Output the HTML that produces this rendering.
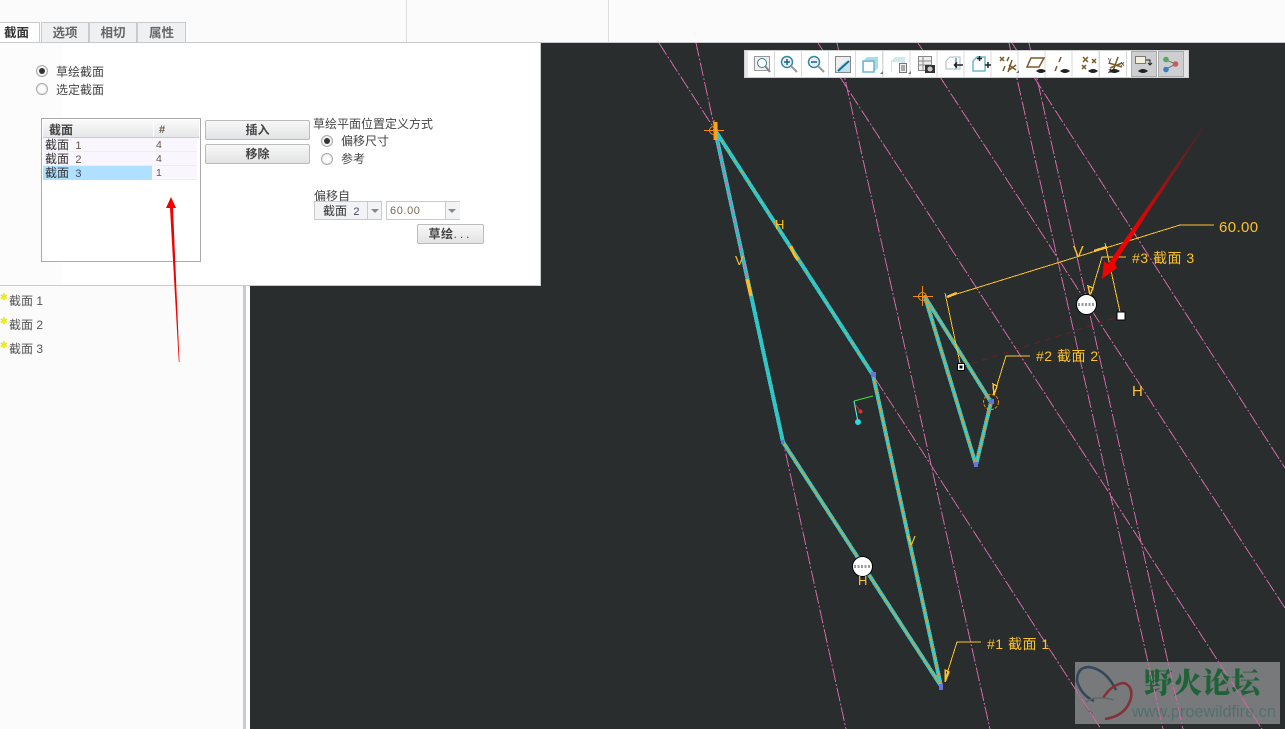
<!DOCTYPE html>
<html><head><meta charset="utf-8"><style>
html,body{margin:0;padding:0;width:1285px;height:729px;overflow:hidden;background:#fbfbfb}
body{position:relative;font-family:"Liberation Sans","Noto Sans CJK SC",sans-serif;font-size:12px;color:#444}
div,span{position:absolute;white-space:nowrap}
.t{line-height:14px}
.tab{top:22px;height:19px;background:#eef0f2;border:1px solid #c8cacc;border-bottom:0;font-weight:bold;color:#666;text-align:center;line-height:20px;font-size:12.5px}
.rb{width:10px;height:10px;border:1px solid #aaa;border-radius:50%;background:#fff;box-shadow:inset 0 0 2px #ccc}
.rb.on:after{content:"";position:absolute;left:2px;top:2px;width:6px;height:6px;border-radius:50%;background:#333}
.btn{background:linear-gradient(#f8f8f8,#e2e3e4);border:1px solid #bcbcbc;border-radius:2px;text-align:center;font-weight:bold;color:#444;line-height:18px}
.row{left:43px;width:154px;height:13px;background:#f9f6fd;border-bottom:1px solid #eee;line-height:14px;color:#333}
.row b{position:absolute;left:110px;width:1px;height:14px;background:#fff}
.row i{position:absolute;font-style:normal}
.row .n{font-size:10.5px;color:#654}
.tree{left:9px;color:#555;line-height:14px}
.star{left:0;color:#eeee00;font-size:9px;line-height:9px;font-weight:bold}
</style></head><body>
<div style="left:406px;top:0;width:1px;height:43px;background:#ddd"></div>
<div style="left:608px;top:0;width:1px;height:43px;background:#ddd"></div>
<div style="left:0;top:42px;width:1285px;height:1px;background:#c8cacc"></div>

<div style="left:250px;top:43px;width:1035px;height:686px;background:#2a2d2e"></div>
<div style="left:243px;top:286px;width:3px;height:443px;background:#c8cacc"></div>
<div style="left:246px;top:286px;width:4px;height:443px;background:#fff"></div>

<!-- watermark -->
<div style="left:1075px;top:662px;width:205px;height:62px;background:#77797a"></div>
<svg width="1285" height="729" style="position:absolute;left:0;top:0">
<g fill="none">
<path d="M1094 701Q1081 695 1077 681Q1077 667 1089 667Q1103 669 1112 683L1116 690" stroke="#33465a" stroke-width="2.500"/>
<path d="M1103 698Q1112 684 1124 683Q1133 686 1131 698Q1126 716 1105 719" stroke="#83303a" stroke-width="2.500"/>
<path d="M1086 702Q1094 695 1114 700M1085 704Q1087 712 1093 713" stroke="#5d686c" stroke-width="1.500"/>
</g>
</svg>
<div style="left:1144px;top:664px;font-family:'Noto Serif CJK SC',serif;font-weight:900;font-size:29px;line-height:36px;color:#1f6238">野火论坛</div>
<div style="left:1132px;top:703px;font-size:16.300px;line-height:19px;color:#52706e">www.proewildfire.cn</div>

<svg width="1285" height="729" style="position:absolute;left:0;top:0">
<defs><linearGradient id="ag" gradientUnits="userSpaceOnUse" x1="1202" y1="128" x2="1130" y2="235"><stop offset="0" stop-color="#f00000" stop-opacity=".1"/><stop offset="1" stop-color="#f00000"/></linearGradient></defs>
<g fill="none" stroke="#cf68a3" stroke-width="1" stroke-dasharray="14 2 2 2" shape-rendering="crispEdges">
<path d="M696 43L846 729M659 43L1101 729M818 43L1262 729M837 43L990 729M918 43L1285 608M1009 43L1163 729M1029 43L1183 729M1012 43L1285 468"/>
</g>
<g fill="none" stroke-linejoin="round" shape-rendering="crispEdges">
<path d="M715 130L783 442L941 686L873 375Z" stroke="#2fc6c8" stroke-width="4"/>
<path d="M925 297L976 465L991 402Z" stroke="#2fc6c8" stroke-width="4"/>
<path d="M783 442L941 686L873 375" stroke="#f0982a" stroke-width="1"/>
<path d="M715 130L873 375" stroke="#f0982a" stroke-width="1" stroke-dasharray="3 9"/>
<path d="M925 297L976 465L991 402Z" stroke="#f0982a" stroke-width="1"/>
<path d="M716 135L752 300" stroke="#cf68a3" stroke-width="1"/>
</g>
<g fill="#6a70e0"><rect x="871" y="372" width="5" height="5"/><rect x="939" y="684" width="4" height="6"/><rect x="974" y="462" width="4" height="5"/><rect x="989" y="399" width="5" height="5"/><rect x="781" y="440" width="3" height="4"/></g>
<path d="M747 279L751 296" stroke="#f9b92a" stroke-width="3.500"/>
<path d="M791 246Q793 254 798 260" stroke="#f9b92a" stroke-width="3" fill="none"/>
<g stroke="#f58a10" fill="none"><path d="M704 130.500H724M714 120V140"/><circle cx="713.500" cy="130.500" r="4"/><path d="M913 296.500H933M922.500 286V306"/><circle cx="922.500" cy="296.500" r="4"/><circle cx="991" cy="402" r="7.500" stroke-dasharray="3 1.500"/></g>
<path d="M716 122L716 140" stroke="#f9a520" stroke-width="3"/>
<g fill="none" stroke="#fcc22a" stroke-width="1" shape-rendering="crispEdges">
<path d="M947 297L1180 225H1214"/>
<path d="M945 293L960 363M1105 243L1120 312"/>
<path d="M1126 257H1102L1091 294"/>
<path d="M1030 356H1006L994 395"/>
<path d="M981 642H957L945 680"/>
<path d="M947 297L957 293M1094 251L1107 247" stroke-width="2.500"/>
<path d="M1088 286L1093 288L1090 295Z M993 384L997 386L994 395Z M945 670L949 672L945 682Z" stroke-width="1.500"/>
</g>
<path d="M961 367L1121 316" stroke="#6a2020" stroke-dasharray="6 5" fill="none" shape-rendering="crispEdges"/>
<rect x="957.500" y="363.500" width="7" height="7" fill="#fff" stroke="#000"/><rect x="959.500" y="365.500" width="3" height="3" fill="#000"/>
<rect x="1117" y="312" width="8" height="8" fill="#fff" stroke="#000"/>
<g><circle cx="1086.500" cy="304.500" r="10" fill="#fff" stroke="#000"/><path d="M1078 304.500H1095" stroke="#999" stroke-width="3" stroke-dasharray="2 1.500"/>
<circle cx="862.500" cy="566.500" r="10" fill="#fff" stroke="#000"/><path d="M854 566.500H871" stroke="#999" stroke-width="3" stroke-dasharray="2 1.500"/></g>
<g fill="none"><path d="M854 401L873 396" stroke="#3ee03e"/><path d="M854 401L858 422" stroke="#5ff"/><path d="M855 404L860 411" stroke="#c33"/></g>
<circle cx="858" cy="422" r="3" fill="#2fd8e0"/><circle cx="860.500" cy="411.500" r="2" fill="#e03030"/>
<g font-family="Liberation Sans,sans-serif" fill="#fcc22a">
<text x="775" y="229" font-size="13">H</text><text x="735" y="265" font-size="13">V</text><text x="1073" y="257" font-size="16">V</text><text x="1132" y="396" font-size="15">H</text><text x="858" y="585" font-size="13">H</text><text x="907" y="545" font-size="13">V</text>
</g>
<g font-family="Liberation Sans,'Noto Sans CJK SC',sans-serif" font-size="14" fill="#fcc22a">
<text x="1219" y="232" font-size="15" letter-spacing=".4">60.00</text>
<text x="1132" y="263" letter-spacing=".5">#3 截面 3</text>
<text x="1036" y="361" letter-spacing=".5">#2 截面 2</text>
<text x="987" y="649" letter-spacing=".5">#1 截面 1</text>
</g>
<polygon points="1202,128 1203,129 1115,263 1117,268 1102,279 1104,261 1108,264" fill="url(#ag)"/>
</svg>

<!-- left tree -->
<div class="star" style="top:293px">✱</div><div class="t tree" style="top:294px">截面 1</div>
<div class="star" style="top:317px">✱</div><div class="t tree" style="top:318px">截面 2</div>
<div class="star" style="top:341px">✱</div><div class="t tree" style="top:342px">截面 3</div>

<!-- dialog -->
<div style="left:0;top:43px;width:540px;height:242px;background:#fff;border-right:1px solid #c8cacc;border-bottom:1px solid #c8cacc"></div>
<div style="left:0;top:43px;width:62px;height:242px;background:#fcfcfc"></div>
<div style="left:0;top:22px;width:40px;height:20px;background:#fff;border-right:1px solid #c8cacc;border-top:1px solid #c8cacc;box-sizing:border-box;font-weight:bold;font-size:12.500px;color:#333;line-height:20px;text-indent:4px">截面</div>
<div class="tab" style="left:41px;width:46px">选项</div>
<div class="tab" style="left:89px;width:46px">相切</div>
<div class="tab" style="left:137px;width:47px">属性</div>

<div class="rb on" style="left:36px;top:65px"></div><div class="t" style="left:56px;top:65px">草绘截面</div>
<div class="rb" style="left:36px;top:83px"></div><div class="t" style="left:56px;top:83px">选定截面</div>

<div style="left:41px;top:118px;width:158px;height:142px;border:1px solid #aaa;background:#fff"></div>
<div style="left:43px;top:120px;width:156px;height:17px;background:linear-gradient(#fafafa,#e6e7e9);border-bottom:1px solid #c8cacc;font-weight:bold;line-height:20px;color:#444;text-indent:6px">截面<span style="left:110px;top:-1px;width:1px;height:18px;background:#fff"></span><span style="left:116px;top:0;text-indent:0;font-size:11px;color:#654">#</span></div>
<div class="row" style="top:138px"><i style="left:2px">截面 <span style="position:static;font-size:11px;color:#654">&nbsp;1</span></i><b></b><i class="n" style="left:113px">4</i></div>
<div class="row" style="top:152px"><i style="left:2px">截面 <span style="position:static;font-size:11px;color:#654">&nbsp;2</span></i><b></b><i class="n" style="left:113px">4</i></div>
<div class="row" style="top:166px"><div style="left:0;top:0;width:109px;height:14px;background:#b0e0ff"></div><i style="left:2px">截面 <span style="position:static;font-size:11px;color:#446">&nbsp;3</span></i><b></b><i class="n" style="left:113px">1</i></div>

<div class="btn" style="left:205px;top:120px;width:103px;height:18px">插入</div>
<div class="btn" style="left:205px;top:144px;width:103px;height:18px">移除</div>

<div class="t" style="left:313px;top:117px">草绘平面位置定义方式</div>
<div class="rb on" style="left:321px;top:135px"></div><div class="t" style="left:341px;top:134px">偏移尺寸</div>
<div class="rb" style="left:321px;top:153px"></div><div class="t" style="left:341px;top:152px">参考</div>
<div class="t" style="left:314px;top:189px">偏移自</div>

<div style="left:314px;top:201px;width:66px;height:17px;background:#f2f3f4;border:1px solid #c8cacc;line-height:19px;text-indent:8px;color:#333">截面 <span style="position:static;font-size:11px;color:#446">&nbsp;2</span>
<span style="left:52px;top:0;width:14px;height:17px;border-left:1px solid #c8cacc"></span><span style="left:56px;top:7px;border:4px solid transparent;border-top:4px solid #888"></span></div>
<div style="left:386px;top:201px;width:72px;height:17px;background:#fff;border:1px solid #c8cacc;line-height:19px;font-size:11px;letter-spacing:.6px;text-indent:3px;color:#7a6a55">60.00
<span style="left:58px;top:0;width:14px;height:17px;background:#f2f3f4;border-left:1px solid #c8cacc"></span><span style="left:61px;top:7px;border:4px solid transparent;border-top:4px solid #888"></span></div>
<div class="btn" style="left:417px;top:224px;width:65px;height:18px;letter-spacing:.5px">草绘<span style="position:static;letter-spacing:3px;font-weight:normal">...</span></div>

<!-- red arrow 1 -->
<svg width="300" height="400" style="position:absolute;left:0;top:0"><polygon points="179.500,362 178.800,362 170,208 166,208 171,197 176,208 173,208" fill="#f00000"/></svg>

<!-- toolbar -->
<div style="left:744px;top:50px;width:443px;height:26px;background:#e4e5e6;border:1px solid #d0d0d0"></div>
<div style="left:748px;top:51px;width:433px;height:26px;background:repeating-linear-gradient(90deg,#fff 0,#fff 26px,#d8d9da 26px,#d8d9da 27.060px)"></div>
<div style="left:1131px;top:51px;width:24px;height:24px;background:#ccced0;border:1px solid #aaa"></div>
<div style="left:1158px;top:51px;width:24px;height:24px;background:#ccced0;border:1px solid #aaa"></div>
<svg width="1285" height="90" style="position:absolute;left:0;top:0" fill="none">
<rect x="754.500" y="56.500" width="15" height="14" fill="#f0f0f0" stroke="#999"/><circle cx="762" cy="63" r="4.500" stroke="#3a7f94" fill="#fff"/><path d="M765 66L770 72" stroke="#888" stroke-width="2"/>
<circle cx="787" cy="62" r="5.500" stroke="#2f8aa0" stroke-width="1.500" fill="#eef"/><path d="M784 62H790M787 59V65" stroke="#14608a" stroke-width="1.500"/><path d="M791 66L797 72" stroke="#999" stroke-width="2"/>
<circle cx="814" cy="62" r="5.500" stroke="#2f8aa0" stroke-width="1.500" fill="#eef"/><path d="M811 62H817" stroke="#14608a" stroke-width="1.500"/><path d="M818 66L824 72" stroke="#999" stroke-width="2"/>
<rect x="835.500" y="56.500" width="15" height="16" fill="#bfe3ee" stroke="#888"/><path d="M836 57H850V60Q842 62 836 71Z" fill="#eee"/><path d="M838 71L849 61" stroke="#1b6f92" stroke-width="2"/>
<path d="M863 72V61L867 57H878V68L874 72Z" fill="#a9dcea"/><rect x="864" y="62" width="10" height="10" fill="#fff"/><path d="M863 61H874V72H863Z" stroke="#6db8cf" stroke-width="1.500"/><path d="M880 74H883V71Z" fill="#777"/>
<path d="M891 72V61L895 57H905V68L901 72Z" fill="#cfe9f1"/><rect x="892" y="62" width="9" height="10" fill="#fff"/><rect x="899.500" y="63.500" width="7" height="9" fill="#eee" stroke="#777"/><path d="M901 66H905M901 68H905M901 70H905" stroke="#666"/><path d="M908 74H911V71Z" fill="#777"/>
<rect x="918.500" y="56.500" width="13" height="14" fill="#eee" stroke="#888"/><path d="M918 61H931M918 65H931M923 57V71" stroke="#888"/><rect x="925" y="65" width="10" height="8" fill="#333"/><circle cx="930" cy="69" r="2.500" fill="#ccc"/>
<path d="M946 61L950 57H960V69H946Z" fill="#fff" stroke="#b4b8ba"/><path d="M956 58V69" stroke="#6db8cf" stroke-width="2"/><path d="M963 65H955M957 62.500L954.500 65L957 67.500" stroke="#222" stroke-width="1.500"/>
<path d="M973 61L977 57H985V71H973Z" fill="#fff" stroke="#6db8cf" stroke-width="1.500"/><path d="M977 58.500H982M979.500 56V61M985 65H991M988 62V68" stroke="#222" stroke-width="1.500"/>
<g stroke="#7a5a28" stroke-width="1.500"><path d="M1000 57L1004 61M1004 57L1000 61M1009 57L1007 61M1003 71L1005 66M1012 60L1008 72M1009 65L1016 70M1016 65L1009 70"/></g><path d="M1016 73H1019V70Z" fill="#777"/>
<path d="M1031 58H1044L1039 67H1027Z" stroke="#7a5a28" stroke-width="1.500"/><path d="M1036 71Q1041 67 1046 71Q1041 75 1036 71Z" fill="#222"/>
<path d="M1061 57L1059 62M1057 66L1055 71" stroke="#7a5a28" stroke-width="1.500"/><path d="M1060 71Q1065 67 1070 71Q1065 75 1060 71Z" fill="#222"/>
<path d="M1083 57L1088 62M1088 57L1083 62M1092 59L1096 63M1096 59L1092 63M1082 65L1086 69M1086 65L1082 69" stroke="#7a5a28" stroke-width="1.500"/><path d="M1088 71Q1093 67 1098 71Q1093 75 1088 71Z" fill="#222"/>
<path d="M1118 57L1113 71M1109 63L1122 67M1122 63L1110 68" stroke="#7a5a28" stroke-width="1.500"/><path d="M1109 71Q1114 67 1120 71Q1114 75 1109 71Z" fill="#222"/>
<text x="1108" y="62" font-size="7" fill="#222" stroke="none" font-family="Liberation Sans">y</text><text x="1121" y="66" font-size="7" fill="#222" stroke="none" font-family="Liberation Sans">x</text><text x="1108" y="73" font-size="7" fill="#222" stroke="none" font-family="Liberation Sans">z</text>
<rect x="1135.500" y="56.500" width="10" height="7" fill="#f5efdc" stroke="#777"/><path d="M1146 60H1150V64M1148 63L1150 65L1152 63" stroke="#222"/><path d="M1138 71Q1143 67 1148 71Q1143 75 1138 71Z" fill="#222"/>
<path d="M1166 60L1176 64L1166 69" stroke="#777"/><circle cx="1166" cy="59.500" r="2.800" fill="#5aa860"/><circle cx="1175.500" cy="64" r="2.800" fill="#c85a5a"/><circle cx="1166" cy="69.500" r="2.800" fill="#3a80c0"/>
</svg>
</body></html>
